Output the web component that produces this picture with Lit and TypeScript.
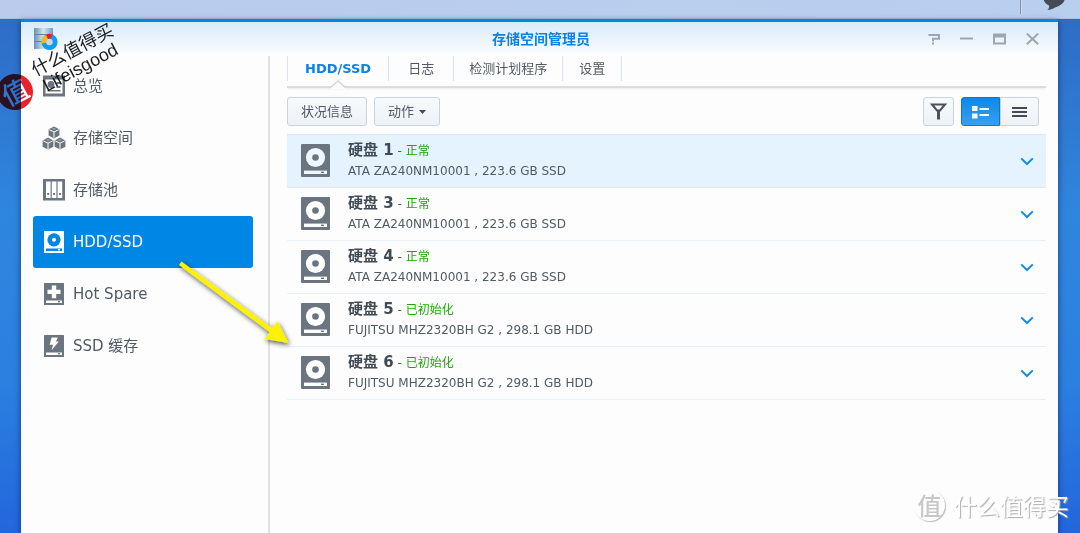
import { LitElement, html, svg, css } from 'lit';
import { customElement, property, state } from 'lit/decorators.js';
import { classMap } from 'lit/directives/class-map.js';

interface Disk {
  name: string;
  status: string;
  detail: string;
}

const DISKS: Disk[] = [
  { name: '硬盘 1', status: '正常', detail: 'ATA ZA240NM10001 , 223.6 GB SSD' },
  { name: '硬盘 3', status: '正常', detail: 'ATA ZA240NM10001 , 223.6 GB SSD' },
  { name: '硬盘 4', status: '正常', detail: 'ATA ZA240NM10001 , 223.6 GB SSD' },
  { name: '硬盘 5', status: '已初始化', detail: 'FUJITSU MHZ2320BH G2 , 298.1 GB HDD' },
  { name: '硬盘 6', status: '已初始化', detail: 'FUJITSU MHZ2320BH G2 , 298.1 GB HDD' },
];

const TABS = ['HDD/SSD', '日志', '检测计划程序', '设置'];

// Isometric cube with white seams; cx, cy is the centre of the hexagon.
const cube = (cx: number, cy: number) => svg`
  <g transform="translate(${cx} ${cy})">
    <path d="M0-6 5.4-3.2V3.2L0 6-5.4 3.2V-3.2Z" fill="currentColor"></path>
    <path d="M-4.8-2.8 0-.4 4.8-2.8M0-.4V5.400" fill="none" stroke="var(--hole)" stroke-width="1"></path>
    <path d="M-2-3.6 0-4.6 2-3.6 0-2.6Z" fill="var(--hole)" opacity=".35"></path>
  </g>`;

// Drive body with the slot at the bottom, shared by the drive style icons.
const drive = svg`
  <rect x="2" y="1" width="20" height="22" rx=".5" fill="currentColor"></rect>
  <rect x="4" y="18.500" width="16" height="2.500" fill="var(--hole)"></rect>
  <rect x="16" y="19" width="2" height="1.400" fill="currentColor"></rect>`;

const ICONS = {
  overview: svg`
    <path d="M1 1.500H23V22.500H1Z" fill="currentColor"></path>
    <rect x="3.500" y="5.500" width="17" height="14" fill="var(--hole)"></rect>
    <circle cx="9" cy="10.500" r="3.400" fill="currentColor"></circle>
    <path d="M14.500 8h4v2h-4zM14.500 12h4v2h-4zM5.500 16h13v1.600h-13z" fill="currentColor"></path>`,
  volume: svg`${cube(12, 6.4)}${cube(6, 17.6)}${cube(18, 17.6)}`,
  pool: svg`
    <rect x="1" y="1" width="22" height="21.500" rx=".5" fill="currentColor"></rect>
    <path d="M4 3.500h4.600v16.500H4zM9.800 3.500h4.600v16.500H9.800zM15.600 3.500h4.600v16.500H15.600z" fill="var(--hole)"></path>
    <path d="M5.200 15h2v2h-2zM11.100 15h2v2h-2zM17 15h2v2h-2z" fill="currentColor"></path>`,
  disk: svg`${drive}
    <circle cx="12" cy="9.800" r="6.600" fill="var(--hole)"></circle>
    <circle cx="12" cy="9.800" r="2" fill="currentColor"></circle>`,
  spare: svg`${drive}
    <path d="M9.800 3.500h4.400v4.200h4.300v4.200h-4.300v4.300H9.800v-4.300H5.500V7.700h4.300z" fill="var(--hole)"></path>`,
  cache: svg`${drive}
    <path d="M9.600 3.500h6.200l-1.900 4.100h2.900l-7.300 8.600 1.500-5.400H7.600z" fill="var(--hole)"></path>`,
};

const NAV: { label: string; icon: keyof typeof ICONS }[] = [
  { label: '总览', icon: 'overview' },
  { label: '存储空间', icon: 'volume' },
  { label: '存储池', icon: 'pool' },
  { label: 'HDD/SSD', icon: 'disk' },
  { label: 'Hot Spare', icon: 'spare' },
  { label: 'SSD 缓存', icon: 'cache' },
];

const resets = css`
  *, *::before, *::after { box-sizing: border-box; }
  button {
    margin: 0;
    padding: 0;
    border: 0;
    background: none;
    color: inherit;
    font: inherit;
    cursor: pointer;
  }
  svg { display: block; flex: none; }
`;

@customElement('disk-row')
export class DiskRow extends LitElement {
  @property({ attribute: false }) disk!: Disk;

  static styles = [resets, css`
    :host {
      --hole: #fff;
      display: flex;
      align-items: flex-start;
      height: 53px;
      padding: 5px 10px 0 14px;
      border-bottom: 1px solid #ebf0f5;
    }
    :host([highlighted]) {
      --hole: #eef7ff;
      background: #e5f3ff;
      border-bottom-color: #deebf5;
    }
    .icon { margin: 4px 18px 0 0; color: #6b7580; }
    .text { flex: 1; min-width: 0; line-height: 20px; }
    .name { font-size: 15px; font-weight: 700; color: #414b55; }
    .status { color: #22a50c; }
    .detail { color: #505a64; }
    .expand {
      display: grid;
      place-items: center;
      width: 18px;
      height: 43px;
      color: #0f8ceb;
    }
  `];

  render() {
    return html`
      <svg class="icon" width="29" height="34" viewBox="0 0 29 34" aria-hidden="true">
        <rect width="29" height="33" rx="1" fill="currentColor"></rect>
        <circle cx="14.500" cy="13.500" r="9.600" fill="var(--hole)"></circle>
        <circle cx="14.500" cy="13.500" r="3.300" fill="currentColor"></circle>
        <rect x="3" y="26.600" width="23" height="3.400" fill="var(--hole)"></rect>
        <rect x="20" y="27.600" width="3" height="1.400" fill="currentColor"></rect>
      </svg>
      <div class="text">
        <div><span class="name">${this.disk.name}</span> - <span class="status">${this.disk.status}</span></div>
        <div class="detail">${this.disk.detail}</div>
      </div>
      <button class="expand" aria-label="展开 ${this.disk.name}">
        <svg width="14" height="9" viewBox="0 0 14 9" fill="none" stroke="currentColor" stroke-width="2">
          <path d="M1.200 1.400 7 7 12.800 1.400"></path>
        </svg>
      </button>`;
  }
}

@customElement('app-root')
export class AppRoot extends LitElement {
  @state() private nav = 3;
  @state() private tab = 0;
  @state() private view = 0;

  static styles = [resets, css`
    :host {
      --hole: #fff;
      position: relative;
      display: flex;
      flex-direction: column;
      height: 100vh;
      overflow: hidden;
      background: linear-gradient(#2e6ac4, #2f86de 40%, #2b80e0 72%, #2366dc);
      color: #505a64;
      font: 12px/18px "DejaVu Sans", "Noto Sans CJK SC", sans-serif;
    }
    .taskbar {
      display: flex;
      justify-content: flex-end;
      flex: none;
      height: 19px;
      padding-right: 14px;
      background: linear-gradient(90deg, #bacbec, #b9cfee);
      border-bottom: 1px solid #a9bfe2;
    }
    .taskbar .rule { width: 1px; height: 14px; margin-right: 21px; background: #7f8fa8; box-shadow: 1px 0 #d2e0f5; }
    .window {
      display: flex;
      flex-direction: column;
      flex: 1;
      min-height: 0;
      margin: 0 22px 0 21px;
      background: #fdfdfe;
      border-top: 3px solid #0086e5;
      box-shadow: 0 2px 6px rgba(0, 20, 70, .6);
    }
    .titlebar {
      display: grid;
      grid-template-columns: 1fr auto 1fr;
      align-items: center;
      flex: none;
      height: 34px;
      padding: 0 9px 0 12px;
      background: linear-gradient(#d8ebfa, #fdfdfe);
    }
    .title { margin: 0; font-size: 14px; font-weight: 700; color: #0a82e6; }
    .controls { display: flex; justify-content: flex-end; color: #9ca6b0; }
    .controls button { display: grid; place-items: center; width: 33px; height: 26px; }
    .body { display: flex; flex: 1; min-height: 0; }
    .sidebar {
      display: flex;
      flex-direction: column;
      flex: none;
      width: 249px;
      padding: 4px 15px 0 12px;
      border-right: 2px solid #e2e2e4;
    }
    .nav {
      display: flex;
      align-items: center;
      gap: 7px;
      height: 52px;
      padding-left: 9px;
      border-radius: 3px;
      color: #6b7580;
      font-size: 15px;
      text-align: left;
    }
    .nav span { color: #505a64; }
    .nav.active { --hole: #0086e5; background: #0086e5; color: #fff; }
    .nav.active span { color: #fff; }
    .content { flex: 1; min-width: 0; padding: 0 12px 0 17px; }
    .tabs {
      display: flex;
      height: 32px;
      border-bottom: 2px solid #dcdcde;
      box-shadow: 0 2px 2px -1px #ececee;
    }
    .tab {
      position: relative;
      height: 25px;
      min-width: 59px;
      padding: 0 16px;
      border-right: 1px solid #dbe4ee;
      font-size: 13px;
    }
    .tab:first-child { padding: 0 17px; border-left: 1px solid #dbe4ee; }
    .tab:nth-child(2) { padding: 0 19px; }
    .tab:nth-child(3) { padding: 0 15px; }
    .tab.active { color: #0a82e6; font-weight: 700; }
    .notch { position: absolute; top: 24px; left: calc(50% - 8px); }
    .toolbar { display: flex; gap: 7px; margin: 9px 0 8px; padding-right: 7px; }
    .btn {
      display: flex;
      align-items: center;
      justify-content: center;
      gap: 5px;
      height: 29px;
      padding: 0 13px;
      background: linear-gradient(#f7fafc, #edf2f8);
      border: 1px solid #c9d4df;
      border-radius: 3px;
      font-size: 13px;
    }
    .btn.filter { width: 31px; margin-left: auto; padding: 0; }
    .segments { display: flex; }
    .segments .btn { width: 39px; padding: 0; border-radius: 0 3px 3px 0; }
    .segments .btn:first-child { border-radius: 3px 0 0 3px; }
    .segments .btn.on { background: linear-gradient(#0f88e6, #36a0f2); border-color: #0a76cc; color: #fff; }
    .disks { margin: 0; padding: 0; list-style: none; border-top: 1px solid #dde8f2; }
    .arrow { position: absolute; left: 170px; top: 252px; pointer-events: none; }
    .stamp {
      position: absolute;
      left: 0;
      top: 0;
      color: #222;
      mix-blend-mode: multiply;
      pointer-events: none;
    }
    .stamp .seal {
      position: absolute;
      left: -3px;
      top: 74px;
      width: 36px;
      height: 36px;
      border-radius: 50%;
      background: #ea2329;
      color: #fff;
      font: 500 26px/34px "Noto Sans CJK SC", sans-serif;
      text-align: center;
      transform: rotate(-28deg);
    }
    .stamp .words {
      position: absolute;
      left: 32px;
      top: 40px;
      font: 18px/19px "Liberation Sans", "Noto Sans CJK SC", sans-serif;
      white-space: nowrap;
      transform: rotate(-28deg);
    }
    .stamp .latin { padding-left: 3px; }
    .credit {
      position: absolute;
      right: 11px;
      bottom: 9px;
      display: flex;
      align-items: center;
      gap: 9px;
      color: #fff;
      font: 23px/38px "Noto Sans CJK SC", sans-serif;
      text-shadow: 1px 1px 1px #aaa;
      pointer-events: none;
    }
    .credit .ring {
      width: 31px;
      height: 31px;
      border-radius: 50%;
      box-shadow: 1px 1px 1px #bbb;
      color: #c8c8c8;
      font-size: 24px;
      font-weight: 500;
      line-height: 30px;
      text-align: center;
      text-shadow: none;
    }
  `];

  render() {
    return html`
      <header class="taskbar">
        <span class="rule"></span>
        <svg width="24" height="12" viewBox="0 0 24 12" aria-hidden="true">
          <path d="M1-4C1-9 23-9 23-3 23 4 17 6 13 7.500 11 9 8 10 5 10 7 9 7.500 7 7 5.500 3 4 1 0 1-4Z" fill="#434b55"></path>
        </svg>
      </header>
      <section class="window">
        <div class="titlebar">
          <svg width="26" height="26" viewBox="0 0 26 26" aria-hidden="true">
            <defs>
              <linearGradient id="steel"><stop stop-color="#6593b8"></stop><stop offset=".5" stop-color="#d5e4ee"></stop><stop offset="1" stop-color="#6f9dbe"></stop></linearGradient>
            </defs>
            <path d="M1 2H20V23H1Z" fill="url(#steel)"></path>
            <path d="M1 8.500H20M1 15.500H20" stroke="#6c8495" stroke-width="1.200"></path>
            <circle cx="16.500" cy="16" r="5.600" fill="none" stroke="#109bf5" stroke-width="5"></circle>
            <path d="M10.900 17A5.600 5.600 0 0 1 14.500 10.800" fill="none" stroke="#f9b81a" stroke-width="5"></path>
            <path d="M14 10.900A5.600 5.600 0 0 1 18.500 10.800" fill="none" stroke="#e0202b" stroke-width="5"></path>
            <circle cx="16.500" cy="16" r="3.200" fill="#c9d8e2"></circle>
          </svg>
          <h1 class="title">存储空间管理员</h1>
          <div class="controls">
            <button aria-label="帮助"><svg width="12" height="12" viewBox="0 0 12 12"><path d="M.5 2H11V5.800H5V8.500" fill="none" stroke="currentColor" stroke-width="2"></path><path d="M4 9.500h2v2H4z" fill="currentColor"></path></svg></button>
            <button aria-label="最小化"><svg width="13" height="12" viewBox="0 0 13 12"><path d="M0 4.500h13v2H0z" fill="currentColor"></path></svg></button>
            <button aria-label="最大化"><svg width="13" height="12" viewBox="0 0 13 12"><path d="M0 .5h13v11H0zM2 4.500v5h9v-5z" fill="currentColor" fill-rule="evenodd"></path></svg></button>
            <button aria-label="关闭"><svg width="13" height="12" viewBox="0 0 13 12"><path d="M.8.600 12.200 11.200M12.200.600.800 11.200" stroke="currentColor" stroke-width="2"></path></svg></button>
          </div>
        </div>
        <div class="body">
          <nav class="sidebar">
            ${NAV.map((item, i) => html`
              <button class=${classMap({ nav: true, active: i === this.nav })} @click=${() => (this.nav = i)}>
                <svg width="24" height="24" viewBox="0 0 24 24" aria-hidden="true">${ICONS[item.icon]}</svg>
                <span>${item.label}</span>
              </button>`)}
          </nav>
          <main class="content">
            <div class="tabs" role="tablist">
              ${TABS.map((label, i) => html`
                <button role="tab" aria-selected=${i === this.tab} class=${classMap({ tab: true, active: i === this.tab })}
                  @click=${() => (this.tab = i)}>${label}${i === this.tab ? html`
                  <svg class="notch" width="16" height="9" viewBox="0 0 16 9" aria-hidden="true">
                    <path d="M0 8 8 1 16 8V9H0Z" fill="#fdfdfe"></path>
                    <path d="M0 8 8 1 16 8" fill="none" stroke="#d6d6d9" stroke-width="1.500"></path>
                  </svg>` : ''}</button>`)}
            </div>
            <div class="toolbar">
              <button class="btn">状况信息</button>
              <button class="btn">动作
                <svg width="7" height="4" viewBox="0 0 7 4" aria-hidden="true"><path d="M0 0h7L3.500 4z" fill="#434b55"></path></svg>
              </button>
              <button class="btn filter" aria-label="筛选">
                <svg width="17" height="18" viewBox="0 0 17 18" fill="none" stroke="#4a525c" aria-hidden="true">
                  <path d="M2 1.500H15L10 7.500H7Z" stroke-width="2"></path>
                  <path d="M8.500 7V16.500" stroke-width="3"></path>
                </svg>
              </button>
              <div class="segments">
                <button class=${classMap({ btn: true, on: this.view === 0 })} aria-label="卡片视图" @click=${() => (this.view = 0)}>
                  <svg width="17" height="14" viewBox="0 0 17 14" fill="currentColor"><path d="M0 1h5.500v5H0zM0 8.500h5.500v5H0zM7.500 3H17v2H7.500zM7.500 9H17v2H7.500z"></path></svg>
                </button>
                <button class=${classMap({ btn: true, on: this.view === 1 })} aria-label="列表视图" @click=${() => (this.view = 1)}>
                  <svg width="15" height="12" viewBox="0 0 15 12" fill="#434b55"><path d="M0 1h15v2H0zM0 5h15v2H0zM0 9h15v2H0z"></path></svg>
                </button>
              </div>
            </div>
            <ul class="disks">
              ${DISKS.map((disk, i) => html`<li><disk-row .disk=${disk} ?highlighted=${i === 0}></disk-row></li>`)}
            </ul>
          </main>
        </div>
      </section>
      <svg class="arrow" width="130" height="104" viewBox="0 0 130 104" aria-hidden="true">
        <defs><filter id="soft" x="-20%" y="-20%" width="140%" height="140%"><feDropShadow dx="1" dy="2" stdDeviation="2.500" flood-color="#000" flood-opacity=".7"></feDropShadow></filter></defs>
        <path d="M11.500 9.500 102 76 107.500 69.500 118.500 91 95 87 99.500 80 9 13Z" fill="#fff200" filter="url(#soft)"></path>
      </svg>
      <div class="stamp">
        <div class="seal">值</div>
        <div class="words"><div>什么值得买</div><div class="latin">Lifeisgood</div></div>
      </div>
      <div class="credit"><span class="ring">值</span><span>什么值得买</span></div>
    `;
  }
}
